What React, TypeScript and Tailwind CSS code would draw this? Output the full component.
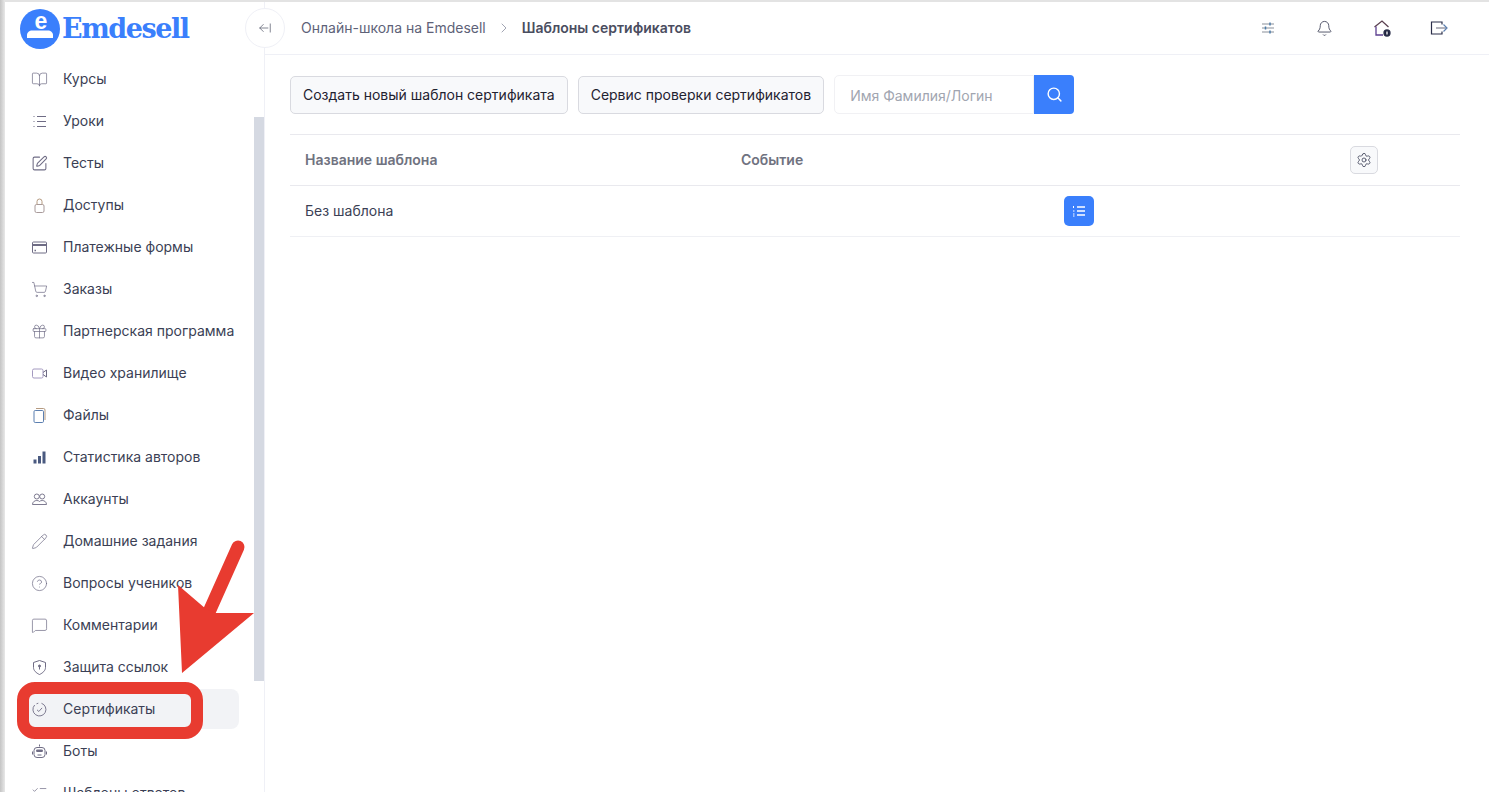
import React from "react";
import { BookOpen, SquarePen, Gift, ShoppingCart, Pencil, CircleHelp, MessageSquare, ListChecks, Search, Settings, Bell, ChevronRight, ArrowLeftFromLine } from "lucide-react";

const ic = "w-[17px] h-[17px] text-[#6f6c85] shrink-0";
const Svg = ({ children, w = 1 }: { children: React.ReactNode; w?: number }) => (
  <svg viewBox="0 0 17 17" className={ic} fill="none" stroke="currentColor" strokeWidth={w}>{children}</svg>
);
const Lock = () => (
  <Svg>
    <rect x="4" y="7.500" width="9" height="8" rx="1.500" stroke="#a89a9a" />
    <path d="M6 7.500V4.500a2.500 2.500 0 0 1 5 0v3" stroke="#b59a80" />
  </Svg>
);
const Card = () => (
  <Svg>
    <rect x="1.500" y="3" width="14" height="11" rx="1" />
    <path d="M1.500 6h14" strokeWidth="2" />
    <path d="M3.500 11.500h1.500" strokeWidth="1.300" />
  </Svg>
);
const Camera = () => (
  <Svg>
    <rect x="1.500" y="4" width="10.500" height="9" rx="1.500" stroke="#a49ac0" />
    <path d="M12 7.500 15.500 5v7L12 9.500" />
  </Svg>
);
const Files = () => (
  <Svg>
    <rect x="3" y="3.500" width="9.500" height="12" rx="1.200" stroke="#5b7fb0" />
    <path d="M5 1.500h7.500A1.500 1.500 0 0 1 14 3v10" stroke="#b59a80" />
  </Svg>
);
const Bars = () => (
  <svg viewBox="0 0 17 17" className={ic} fill="#4a5a80">
    <rect x="2.500" y="10.500" width="3" height="4" />
    <rect x="7" y="7" width="3" height="7.500" />
    <rect x="11.500" y="2.500" width="3" height="12" />
  </svg>
);
const Users = () => (
  <Svg w={0.900}>
    <circle cx="5.800" cy="5.500" r="2.500" />
    <circle cx="11.200" cy="5.500" r="2.500" />
    <path d="M1.500 13.500c0-2.500 2-4 4.300-4 1.300 0 2.200.4 2.700 1 .5-.6 1.500-1 2.700-1 2.300 0 4.300 1.500 4.300 4Z" />
  </Svg>
);
const Shield = () => (
  <Svg>
    <path d="M8.500 1.500 14.500 3.500V8.500c0 3-2.700 5.500-6 7-3.300-1.500-6-4-6-7V3.500Z" />
    <circle cx="8.500" cy="7" r="1" fill="currentColor" />
    <path d="M8.500 7.500v3" />
  </Svg>
);
const Badge = () => (
  <Svg w={0.900}>
    <path d="M10.500 2.300A6.500 6.500 0 1 1 3.700 4" />
    <path d="M5.500 2.800l1.800-.6" />
    <path d="m6 8.800 1.800 1.700 3.300-3.600" />
  </Svg>
);
const Lines = () => (
  <Svg>
    <path d="M2.500 3.500h1M6 3.500h9M2.500 8.500h1M6 8.500h9M2.500 13.500h1M6 13.500h9" />
  </Svg>
);
const Bot = () => (
  <Svg>
    <path d="M8.500 1.500v2" />
    <rect x="3" y="4.500" width="11" height="10" rx="3" />
    <rect x="5" y="6.500" width="7" height="2.500" rx="1.200" fill="#6f6c85" stroke="none" />
    <path d="M1.500 8.500v3M15.500 8.500v3M6.500 12h4" />
  </Svg>
);
const Sliders = () => (
  <svg viewBox="0 0 16 16" className="w-[16px] h-[16px]" fill="none" stroke="#8a8f99" strokeWidth="1.200">
    <path d="M2 4h12M2 8h12M2 12h12" />
    <path d="M10 2.500v3M5.500 6.500v3M10 10.500v3" stroke="#4a7ba8" strokeWidth="1.500" />
  </svg>
);
const HomeBadge = () => (
  <svg viewBox="0 0 20 20" className="w-[20px] h-[20px]" fill="none" stroke="#2b2f4a" strokeWidth="1.300">
    <path d="M2.500 9 10 3l6.500 6" stroke="#5a4050" />
    <path d="M4 8.500V17h7" stroke="#5c3f90" />
    <circle cx="15" cy="15" r="3" fill="#1f2440" />
    <path d="M15 13.500v3" stroke="#fff" />
  </svg>
);
const Exit = () => (
  <svg viewBox="0 0 18 18" className="w-[18px] h-[18px]" fill="none" strokeWidth="1.200">
    <path d="M12 5.500V3H1.500v12H12v-2.500" stroke="#2b2f4a" />
    <path d="M6 9h10" stroke="#9a9aa6" strokeWidth="1.500" />
    <path d="M13.500 5.500 17 9l-3.500 3.500" stroke="#5b7fb0" />
  </svg>
);
const OrderedList = () => (
  <svg viewBox="0 0 14 14" className="w-[14px] h-[14px]" fill="none" stroke="#fff" strokeWidth="1.500">
    <path d="M5 3h8M5 7h8M5 11h8" />
    <path d="M1.500 2v2M1 7h1.500M1 10h1.500M1 12h1.500" strokeWidth="1" />
  </svg>
);

const items: [string, React.ReactNode][] = [
  ["Курсы", <BookOpen className={ic} strokeWidth={1} />],
  ["Уроки", <Lines />],
  ["Тесты", <SquarePen className={ic} strokeWidth={1.500} />],
  ["Доступы", <Lock />],
  ["Платежные формы", <Card />],
  ["Заказы", <ShoppingCart className={ic} strokeWidth={1} />],
  ["Партнерская программа", <Gift className={ic} strokeWidth={1} />],
  ["Видео хранилище", <Camera />],
  ["Файлы", <Files />],
  ["Статистика авторов", <Bars />],
  ["Аккаунты", <Users />],
  ["Домашние задания", <Pencil className={ic} strokeWidth={1} />],
  ["Вопросы учеников", <CircleHelp className={ic} strokeWidth={1} />],
  ["Комментарии", <MessageSquare className={ic} strokeWidth={1} />],
  ["Защита ссылок", <Shield />],
  ["Сертификаты", <Badge />],
  ["Боты", <Bot />],
  ["Шаблоны ответов", <ListChecks className={ic} strokeWidth={1} />],
];

export default function App() {
  return (
    <div className="relative h-[792px] overflow-hidden bg-white pt-[2px] pl-[5px] flex font-['Inter',sans-serif] text-[14px] text-[#3b3f55]">
      <div className="absolute inset-x-0 top-0 h-[2px] bg-[#e3e3e3]" />
      <div className="absolute inset-y-0 left-0 w-[5px] bg-gradient-to-r from-[#c4c4c4] to-[#e8e8e8]" />

      <aside className="relative w-[260px] shrink-0 border-r border-[#eff0f6] overflow-hidden">
        <div className="h-[57px] flex items-start pl-[15px] pt-[7px]">
          <svg viewBox="0 0 40 40" className="w-[40px] h-[40px] shrink-0">
            <circle cx="20" cy="20" r="20" fill="#3a7ffc" />
            <text x="21" y="19.500" textAnchor="middle" fontFamily="Liberation Sans, sans-serif" fontWeight="700" fontSize="23" fill="#fff">e</text>
            <path d="M7 29v-3c0-2.500 2.500-4.500 5-4.500h16c2.500 0 5 2 5 4.500v3Z" fill="#fff" />
          </svg>
          <span className="ml-[2px] font-['DejaVu_Serif',serif] font-bold text-[27px] leading-[40px] tracking-[-1.450px] text-[#3a7ffc]">Emdesell</span>
        </div>
        <nav className="px-[15px]">
          {items.map(([t, icon]) => (
            <div key={t} className={`h-[40px] mb-[2px] w-[219px] rounded-[8px] pl-[11px] flex items-center gap-[15px] ${t === "Сертификаты" ? "bg-[#f2f3f6]" : ""}`}>
              {icon}
              <span className="whitespace-nowrap pb-[1px]">{t}</span>
            </div>
          ))}
        </nav>
        <div className="absolute right-0 top-[115px] w-[10px] h-[564px] bg-[#d5d9e2]" />
      </aside>

      <main className="flex-1 min-w-0 flex flex-col">
        <header className="relative h-[53px] shrink-0 border-b border-[#eff0f6] flex items-center pl-[36px] pr-[22px]">
          <div className="absolute left-[-20px] top-[6px] w-[40px] h-[40px] rounded-full bg-white border border-[#eff0f6] flex items-center justify-center">
            <ArrowLeftFromLine className="w-[14px] h-[14px] text-[#5b5f70]" strokeWidth={1.300} />
          </div>
          <span className="text-[#5e6278] pb-[2px]">Онлайн-школа на Emdesell</span>
          <ChevronRight className="w-[16px] h-[16px] mx-[10px] text-[#8a8ea0]" strokeWidth={1.200} />
          <span className="font-semibold text-[#4a4d60] pb-[2px]">Шаблоны сертификатов</span>
          <div className="ml-auto flex">
            <div className="w-[57px] flex justify-center items-center"><Sliders /></div>
            <div className="w-[57px] flex justify-center items-center"><Bell className="w-[17px] h-[17px] text-[#3b3f55]" strokeWidth={1.200} /></div>
            <div className="w-[57px] flex justify-center items-center"><HomeBadge /></div>
            <div className="w-[57px] flex justify-center items-center"><Exit /></div>
          </div>
        </header>

        <div className="pt-[20px] pl-[25px] pr-[29px]">
          <div className="flex items-center gap-[10px] h-[39px]">
            <button className="h-[38px] px-[12px] rounded-[5px] border border-[#d9dae0] bg-[#f8f9fb] text-[#1f2230] whitespace-nowrap">Создать новый шаблон сертификата</button>
            <button className="h-[38px] px-[12px] rounded-[5px] border border-[#d9dae0] bg-[#f8f9fb] text-[#1f2230] whitespace-nowrap">Сервис проверки сертификатов</button>
            <div className="flex h-[39px]">
              <input placeholder="Имя Фамилия/Логин" className="w-[200px] h-full rounded-l-[5px] border border-[#f1f1f4] bg-white pl-[15px] pt-[1px] outline-none placeholder:text-[#a1a5b0] text-[14px]" />
              <div className="w-[40px] h-full rounded-r-[4px] bg-[#3a7ffc] flex items-center justify-center">
                <Search className="w-[17px] h-[17px] text-white" strokeWidth={2} />
              </div>
            </div>
          </div>

          <div className="mt-[20px] border-t border-[#e9e9ee]">
            <div className="h-[51px] border-b border-[#e9e9ee] flex items-center pl-[15px] font-semibold text-[#6f7280]">
              <span className="w-[436px] pb-[2px]">Название шаблона</span>
              <span className="w-[609px] pb-[2px]">Событие</span>
              <div className="w-[28px] h-[28px] rounded-[5px] border border-[#d9dae0] bg-[#f8f9fb] flex items-center justify-center">
                <Settings className="w-[16px] h-[16px] text-[#3b3f55]" strokeWidth={1.200} />
              </div>
            </div>
            <div className="h-[51px] border-b border-[#eff0f4] flex items-center pl-[15px] text-[#3b3f55]">
              <span className="w-[759px] pb-[2px]">Без шаблона</span>
              <div className="w-[30px] h-[30px] rounded-[5px] bg-[#3a7ffc] flex items-center justify-center">
                <OrderedList />
              </div>
            </div>
          </div>
        </div>
      </main>

      {/* red annotation drawn over the screenshot */}
      <div className="absolute left-[17px] top-[682px] w-[186px] h-[57px] rounded-[18px] border-[12px] border-[#e83b30]" />
      <svg className="absolute left-0 top-0 pointer-events-none" width="300" height="792" viewBox="0 0 300 792" fill="none">
        <path d="M238 547 209 612" stroke="#e83b30" strokeWidth="13" strokeLinecap="round" />
        <path d="M178 585 206 609 216 613 254 613 182 673Z" fill="#e83b30" />
      </svg>
    </div>
  );
}
